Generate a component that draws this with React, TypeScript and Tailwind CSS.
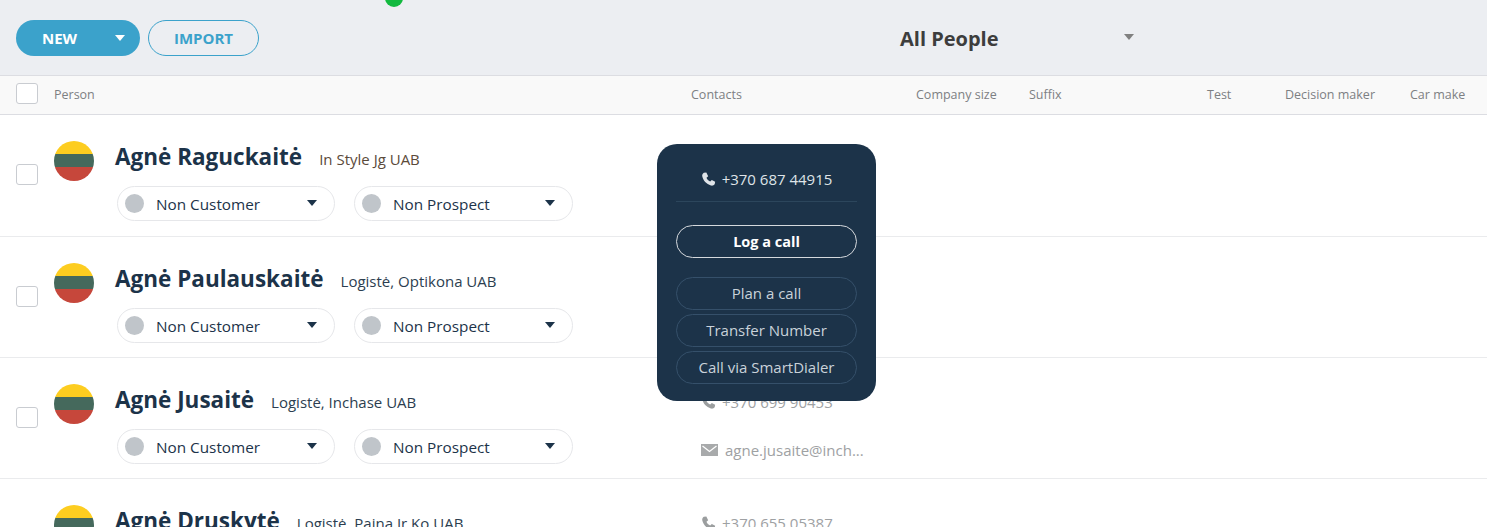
const columns = [
  { label: "Contacts", width: "w-[225px]" },
  { label: "Company size", width: "w-[113px]" },
  { label: "Suffix", width: "w-[178px]" },
  { label: "Test", width: "w-[78px]" },
  { label: "Decision maker", width: "w-[125px]" },
  { label: "Car make", width: "w-[60px]" },
];

const people = [
  { name: "Agnė Raguckaitė", job: "In Style Jg UAB", jobColor: "text-[#5b4a3a]", phone: "", email: "" },
  { name: "Agnė Paulauskaitė", job: "Logistė, Optikona UAB", jobColor: "text-[#2c3e50]", phone: "", email: "" },
  { name: "Agnė Jusaitė", job: "Logistė, Inchase UAB", jobColor: "text-[#2c3e50]", phone: "+370 699 90453", email: "agne.jusaite@inch..." },
  { name: "Agnė Druskytė", job: "Logistė, Paina Ir Ko UAB", jobColor: "text-[#2c3e50]", phone: "+370 655 05387", email: "" },
];

function PhoneIcon({ className }: { className: string }) {
  return (
    <svg viewBox="0 0 18 18" className={className} fill="currentColor">
      <path d="M3.4 1 6.4.6 8.6 5 6.6 7C7.4 9 8.9 10.6 11 11.5l2-2 4 2.2-.5 2.8c-1 1.6-3 2.2-4.6 1.7C6.5 14.7 2.5 10.2 1.5 5.2 1.2 3.6 2 2 3.4 1Z" />
    </svg>
  );
}

function MailIcon() {
  return (
    <svg viewBox="0 0 17 12" className="w-[17px] h-[12px] shrink-0">
      <rect width="17" height="12" fill="#a8aaab" />
      <path d="M1.5 2 8.5 7.5 15.5 2" fill="none" stroke="#fff" strokeWidth="1.3" />
    </svg>
  );
}

function Checkbox() {
  return <div className="w-[22px] h-[21px] bg-white border border-[#c9ccd1] rounded-[3px] shrink-0" />;
}

function Caret({ className }: { className: string }) {
  return <div className={`w-0 h-0 border-x-[5px] border-x-transparent border-t-[6px] ${className}`} />;
}

function StatusPill({ label, width }: { label: string; width: string }) {
  return (
    <div className={`${width} h-[35px] flex items-center pl-[7px] pr-[17px] bg-white border border-[#e6e7ea] rounded-full`}>
      <div className="w-[19px] h-[19px] rounded-full bg-[#c0c5ca]" />
      <span className="ml-[12px] pt-[2px] text-[15.3px] font-medium text-[#1c3349]">{label}</span>
      <Caret className="ml-auto -mt-[2px] border-t-[#1c3349]" />
    </div>
  );
}

function Flag() {
  return (
    <div className="w-[40px] h-[40px] rounded-full overflow-hidden flex flex-col shrink-0">
      <div className="h-[13px] bg-[#fdcd20]" />
      <div className="h-[13px] bg-[#45695c]" />
      <div className="h-[14px] bg-[#c6473b]" />
    </div>
  );
}

function PersonRow({ person }: { person: (typeof people)[number] }) {
  return (
    <div className="h-[121px] first:h-[122px] flex pl-4 border-b border-[#eaebed] bg-white shrink-0">
      <div className="w-[38px] pt-[49px] shrink-0">
        <Checkbox />
      </div>
      <div className="pt-[26px]">
        <Flag />
      </div>
      <div className="w-[599px] pl-[21px] pt-[25px] shrink-0">
        <div className="h-[34px] flex items-baseline gap-[17px] text-[#1c3349]">
          <span className="text-[22.5px] font-bold leading-[34px]">{person.name}</span>
          <span className={`text-[15px] ${person.jobColor}`}>{person.job}</span>
        </div>
        <div className="flex gap-[19px] pl-[2px] mt-[12px]">
          <StatusPill label="Non Customer" width="w-[218px]" />
          <StatusPill label="Non Prospect" width="w-[219px]" />
        </div>
      </div>
      <div className="pl-[8px] pt-[32px] text-[15px] text-[#9ea1a3]">
        {person.phone && (
          <div className="h-[24px] flex items-center">
            <PhoneIcon className="w-[15px] h-[15px] text-[#9b9e9f]" />
            <span className="ml-[6px]">{person.phone}</span>
          </div>
        )}
        {person.email && (
          <div className="h-[24px] flex items-center mt-[24px]">
            <MailIcon />
            <span className="ml-[7px]">{person.email}</span>
          </div>
        )}
      </div>
    </div>
  );
}

function PhonePopover() {
  return (
    <div className="absolute left-[657px] top-[144px] w-[219px] h-[257px] bg-[#1c3349] rounded-[20px] px-[19px] text-[15px] text-[#c9d2da]">
      <div className="h-[58px] flex items-center justify-center border-b border-[#2c465c] text-[#dfe4e8] pt-[13px]">
        <PhoneIcon className="w-[15px] h-[15px] text-[#dfe4e8]" />
        <span className="ml-[6px]">+370 687 44915</span>
      </div>
      <button className="w-full h-[33px] mt-[23px] rounded-full border border-[#d5d9dd] text-white font-bold text-[14.5px]">
        Log a call
      </button>
      <div className="mt-[19px] flex flex-col gap-[4px]">
        {["Plan a call", "Transfer Number", "Call via SmartDialer"].map((label) => (
          <button key={label} className="w-full h-[33px] rounded-full border border-[#35506a]">
            {label}
          </button>
        ))}
      </div>
    </div>
  );
}

export default function App() {
  return (
    <div className="relative h-[527px] overflow-hidden bg-white font-['Open_Sans',sans-serif]">
      <div className="absolute left-[385px] -top-[11px] w-[18px] h-[18px] rounded-full bg-[#12b93f]" />

      {/* toolbar */}
      <div className="h-[76px] flex items-center pl-4 pt-[1px] bg-[#eceef2] border-b border-[#dcdde2]">
        <button className="w-[124px] h-[36px] flex items-center pl-[26px] pr-[15px] rounded-full bg-[#3ba2cb] text-white text-[15px] font-bold">
          NEW
          <Caret className="ml-auto border-t-white" />
        </button>
        <button className="w-[111px] h-[36px] ml-2 rounded-full border border-[#3ba2cb] text-[#3ba2cb] text-[15px] font-bold">
          IMPORT
        </button>
        <span className="ml-[641px] pt-[2px] text-[20px] font-bold text-[#3d3d3d]">All People</span>
        <Caret className="ml-[125px] -mt-[3px] border-t-[#808080]" />
      </div>

      {/* column header */}
      <div className="h-[39px] flex items-center pl-4 bg-[#f9f9f9] border-b border-[#dcdde2] text-[12.5px] text-[#7d8083]">
        <div className="w-[38px] -mt-[4px]">
          <Checkbox />
        </div>
        <div className="w-[637px]">Person</div>
        {columns.map((col) => (
          <div key={col.label} className={`${col.width} whitespace-nowrap`}>
            {col.label}
          </div>
        ))}
      </div>

      <div className="flex flex-col">
        {people.map((person) => (
          <PersonRow key={person.name} person={person} />
        ))}
      </div>

      <PhonePopover />
    </div>
  );
}
